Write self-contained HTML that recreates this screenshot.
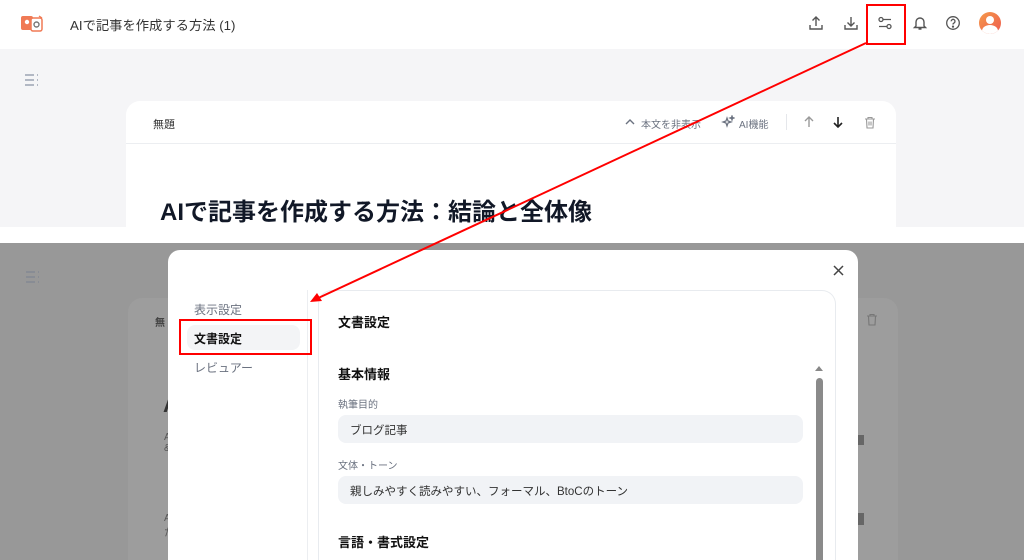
<!DOCTYPE html>
<html><head><meta charset="utf-8"><style>
*{margin:0;padding:0;box-sizing:border-box}
html,body{width:1024px;height:560px;overflow:hidden}
body{position:relative;background:#fff;font-family:"Liberation Sans","Noto Sans CJK JP",sans-serif;color:#1f2430}
.a{position:absolute}
</style></head><body>
<div class="a" style="left:0;top:0;width:1024px;height:49px;background:#fff"></div>
<svg class="a" style="left:20px;top:13px" width="26" height="20" viewBox="0 0 26 20"><rect x="1" y="3" width="12" height="14" rx="2" fill="#f07a55"/><circle cx="7" cy="9" r="2.2" fill="#fff"/><rect x="11" y="5" width="11" height="13" rx="2" fill="#fff" stroke="#f07a55" stroke-width="1.5"/><circle cx="16.5" cy="11.5" r="2.5" fill="none" stroke="#777" stroke-width="1.4"/><path d="M19 3l3 2" stroke="#f07a55" stroke-width="1.3"/></svg>
<div class="a" style="left:70px;top:15px;font-size:13.3px;color:#333">AIで記事を作成する方法 (1)</div>
<svg class="a" style="left:808px;top:15px" width="16" height="16" viewBox="0 0 16 16" fill="none" stroke="#555" stroke-width="1.4"><path d="M8 11V2M4.5 5.5L8 2l3.5 3.5M2 10v4h12v-4"/></svg>
<svg class="a" style="left:843px;top:15px" width="16" height="16" viewBox="0 0 16 16" fill="none" stroke="#555" stroke-width="1.4"><path d="M8 2v9M4.5 7.5L8 11l3.5-3.5M2 10v4h12v-4"/></svg>
<svg class="a" style="left:877px;top:16px" width="16" height="14" viewBox="0 0 16 14" fill="none" stroke="#555" stroke-width="1.3"><circle cx="4" cy="3.5" r="2"/><path d="M6 3.5h8M2 10.5h8"/><circle cx="12" cy="10.5" r="2"/></svg>
<svg class="a" style="left:912px;top:15px" width="16" height="16" viewBox="0 0 16 16" fill="none" stroke="#555" stroke-width="1.4"><path d="M4 11V7a4 4 0 018 0v4l1.5 1.5h-11zM6.5 14h3"/></svg>
<svg class="a" style="left:945px;top:15px" width="16" height="16" viewBox="0 0 16 16" fill="none" stroke="#555" stroke-width="1.3"><circle cx="8" cy="8" r="6.3"/><path d="M6.2 6.3a1.9 1.9 0 113 1.5c-.8.5-1.2.9-1.2 1.7"/><circle cx="8" cy="11.6" r=".5" fill="#555"/></svg>
<div class="a" style="left:979px;top:12px;width:22px;height:22px;border-radius:50%;background:linear-gradient(135deg,#f59a4a,#ee5b4f);overflow:hidden"><div class="a" style="left:7px;top:4px;width:8px;height:8px;border-radius:50%;background:#fff"></div><div class="a" style="left:3px;top:13px;width:16px;height:12px;border-radius:50%;background:#fff"></div></div>
<div class="a" style="left:0;top:49px;width:1024px;height:178px;background:#f5f5f7"></div>
<svg class="a" style="left:24px;top:73px" width="16" height="14" viewBox="0 0 16 14" stroke="#8a94a6" stroke-width="1.3"><path d="M1 2h9M1 7h9M1 12h9M13 2h1M13 7h1M13 12h1"/></svg>
<div class="a" style="left:126px;top:101px;width:770px;height:126px;background:#fff;border-radius:14px 14px 0 0"></div>
<div class="a" style="left:126px;top:143px;width:770px;height:1px;background:#eceef1"></div>
<div class="a" style="left:153px;top:116px;font-size:11px;color:#333">無題</div>
<svg class="a" style="left:625px;top:118px" width="10" height="8" viewBox="0 0 10 8" fill="none" stroke="#6b7280" stroke-width="1.4"><path d="M1 6l4-4 4 4"/></svg>
<div class="a" style="left:641px;top:116px;font-size:10px;color:#6b7280">本文を非表示</div>
<svg class="a" style="left:721px;top:115px" width="14" height="14" viewBox="0 0 14 14" fill="none" stroke="#6b7280" stroke-width="1.2"><path d="M6 3l1 3 3 1-3 1-1 3-1-3-3-1 3-1zM11 1l.5 1.5L13 3l-1.5.5L11 5l-.5-1.5L9 3l1.5-.5z"/></svg>
<div class="a" style="left:739px;top:116px;font-size:10px;color:#6b7280">AI機能</div>
<div class="a" style="left:786px;top:114px;width:1px;height:16px;background:#e5e7eb"></div>
<svg class="a" style="left:803px;top:116px" width="12" height="12" viewBox="0 0 12 12" fill="none" stroke="#999" stroke-width="1.4"><path d="M6 11V1M2 5l4-4 4 4"/></svg>
<svg class="a" style="left:832px;top:116px" width="12" height="12" viewBox="0 0 12 12" fill="none" stroke="#222" stroke-width="1.6"><path d="M6 1v10M2 7l4 4 4-4"/></svg>
<svg class="a" style="left:864px;top:116px" width="12" height="13" viewBox="0 0 12 13" fill="none" stroke="#999" stroke-width="1.1"><path d="M1 3h10M4 3V1.5h4V3M2.5 3l.5 9h6l.5-9M5 5.5v4M7 5.5v4"/></svg>
<div class="a" style="left:160px;top:192px;font-size:24px;font-weight:bold;color:#111827">AIで記事を作成する方法：結論と全体像</div>
<div class="a" style="left:0;top:243px;width:1024px;height:317px;background:#989898"></div>
<svg class="a" style="left:25px;top:270px" width="16" height="14" viewBox="0 0 16 14" stroke="#7e8591" stroke-width="1.3"><path d="M1 2h9M1 7h9M1 12h9M13 2h1M13 7h1M13 12h1"/></svg>
<div class="a" style="left:128px;top:298px;width:770px;height:262px;background:#9d9d9d;border-radius:14px 14px 0 0"></div>
<div class="a" style="left:155px;top:314px;font-size:10px;color:#444;font-weight:bold">無</div>
<div class="a" style="left:163px;top:392px;font-size:22px;color:#333;font-weight:bold">A</div>
<div class="a" style="left:164px;top:432px;font-size:10px;color:#555">A<br>&amp;</div>
<div class="a" style="left:164px;top:513px;font-size:10px;color:#555">A<br>た</div>
<svg class="a" style="left:866px;top:313px" width="12" height="13" viewBox="0 0 12 13" fill="none" stroke="#777" stroke-width="1.1"><path d="M1 3h10M4 3V1.5h4V3M2.5 3l.5 9h6l.5-9"/></svg>
<div class="a" style="left:858px;top:435px;width:6px;height:10px;background:#666"></div>
<div class="a" style="left:858px;top:513px;width:6px;height:12px;background:#666"></div>
<div class="a" style="left:168px;top:250px;width:690px;height:310px;background:#fff;border-radius:12px 12px 0 0"></div>
<svg class="a" style="left:833px;top:265px" width="11" height="11" viewBox="0 0 11 11" stroke="#444" stroke-width="1.5"><path d="M1 1l9 9M10 1l-9 9"/></svg>
<div class="a" style="left:194px;top:301px;font-size:12px;color:#6b7280">表示設定</div>
<div class="a" style="left:187px;top:325px;width:113px;height:25px;background:#f3f4f6;border-radius:8px"></div>
<div class="a" style="left:194px;top:330px;font-size:12px;font-weight:bold;color:#111">文書設定</div>
<div class="a" style="left:194px;top:359px;font-size:12px;color:#6b7280">レビュアー</div>
<div class="a" style="left:307px;top:290px;width:1px;height:270px;background:#eceef1"></div>
<div class="a" style="left:318px;top:290px;width:518px;height:270px;border:1px solid #e8ebef;border-bottom:none;border-radius:14px 14px 0 0"></div>
<div class="a" style="left:338px;top:312px;font-size:13px;font-weight:bold;color:#111">文書設定</div>
<div class="a" style="left:338px;top:364px;font-size:13px;font-weight:bold;color:#111">基本情報</div>
<div class="a" style="left:338px;top:396px;font-size:10px;color:#6b7280">執筆目的</div>
<div class="a" style="left:338px;top:415px;width:465px;height:28px;background:#f1f3f6;border-radius:8px"></div>
<div class="a" style="left:350px;top:422px;font-size:11.5px;color:#333">ブログ記事</div>
<div class="a" style="left:338px;top:457px;font-size:10px;color:#6b7280">文体・トーン</div>
<div class="a" style="left:338px;top:476px;width:465px;height:28px;background:#f1f3f6;border-radius:8px"></div>
<div class="a" style="left:350px;top:483px;font-size:11.5px;color:#333">親しみやすく読みやすい、フォーマル、BtoCのトーン</div>
<div class="a" style="left:338px;top:532px;font-size:13px;font-weight:bold;color:#111">言語・書式設定</div>
<div class="a" style="left:815px;top:366px;width:0;height:0;border-left:4px solid transparent;border-right:4px solid transparent;border-bottom:5px solid #888"></div>
<div class="a" style="left:816px;top:378px;width:7px;height:182px;background:#8a8a8a;border-radius:4px 4px 0 0"></div>
<div class="a" style="left:866px;top:4px;width:40px;height:41px;border:2px solid #f00"></div>
<div class="a" style="left:179px;top:319px;width:133px;height:36px;border:2px solid #f00"></div>
<svg class="a" style="left:0;top:0" width="1024" height="560"><line x1="866" y1="43" x2="314" y2="300" stroke="#f00" stroke-width="2"/><path d="M310 302l12-1-5-8z" fill="#f00"/></svg>
</body></html>
